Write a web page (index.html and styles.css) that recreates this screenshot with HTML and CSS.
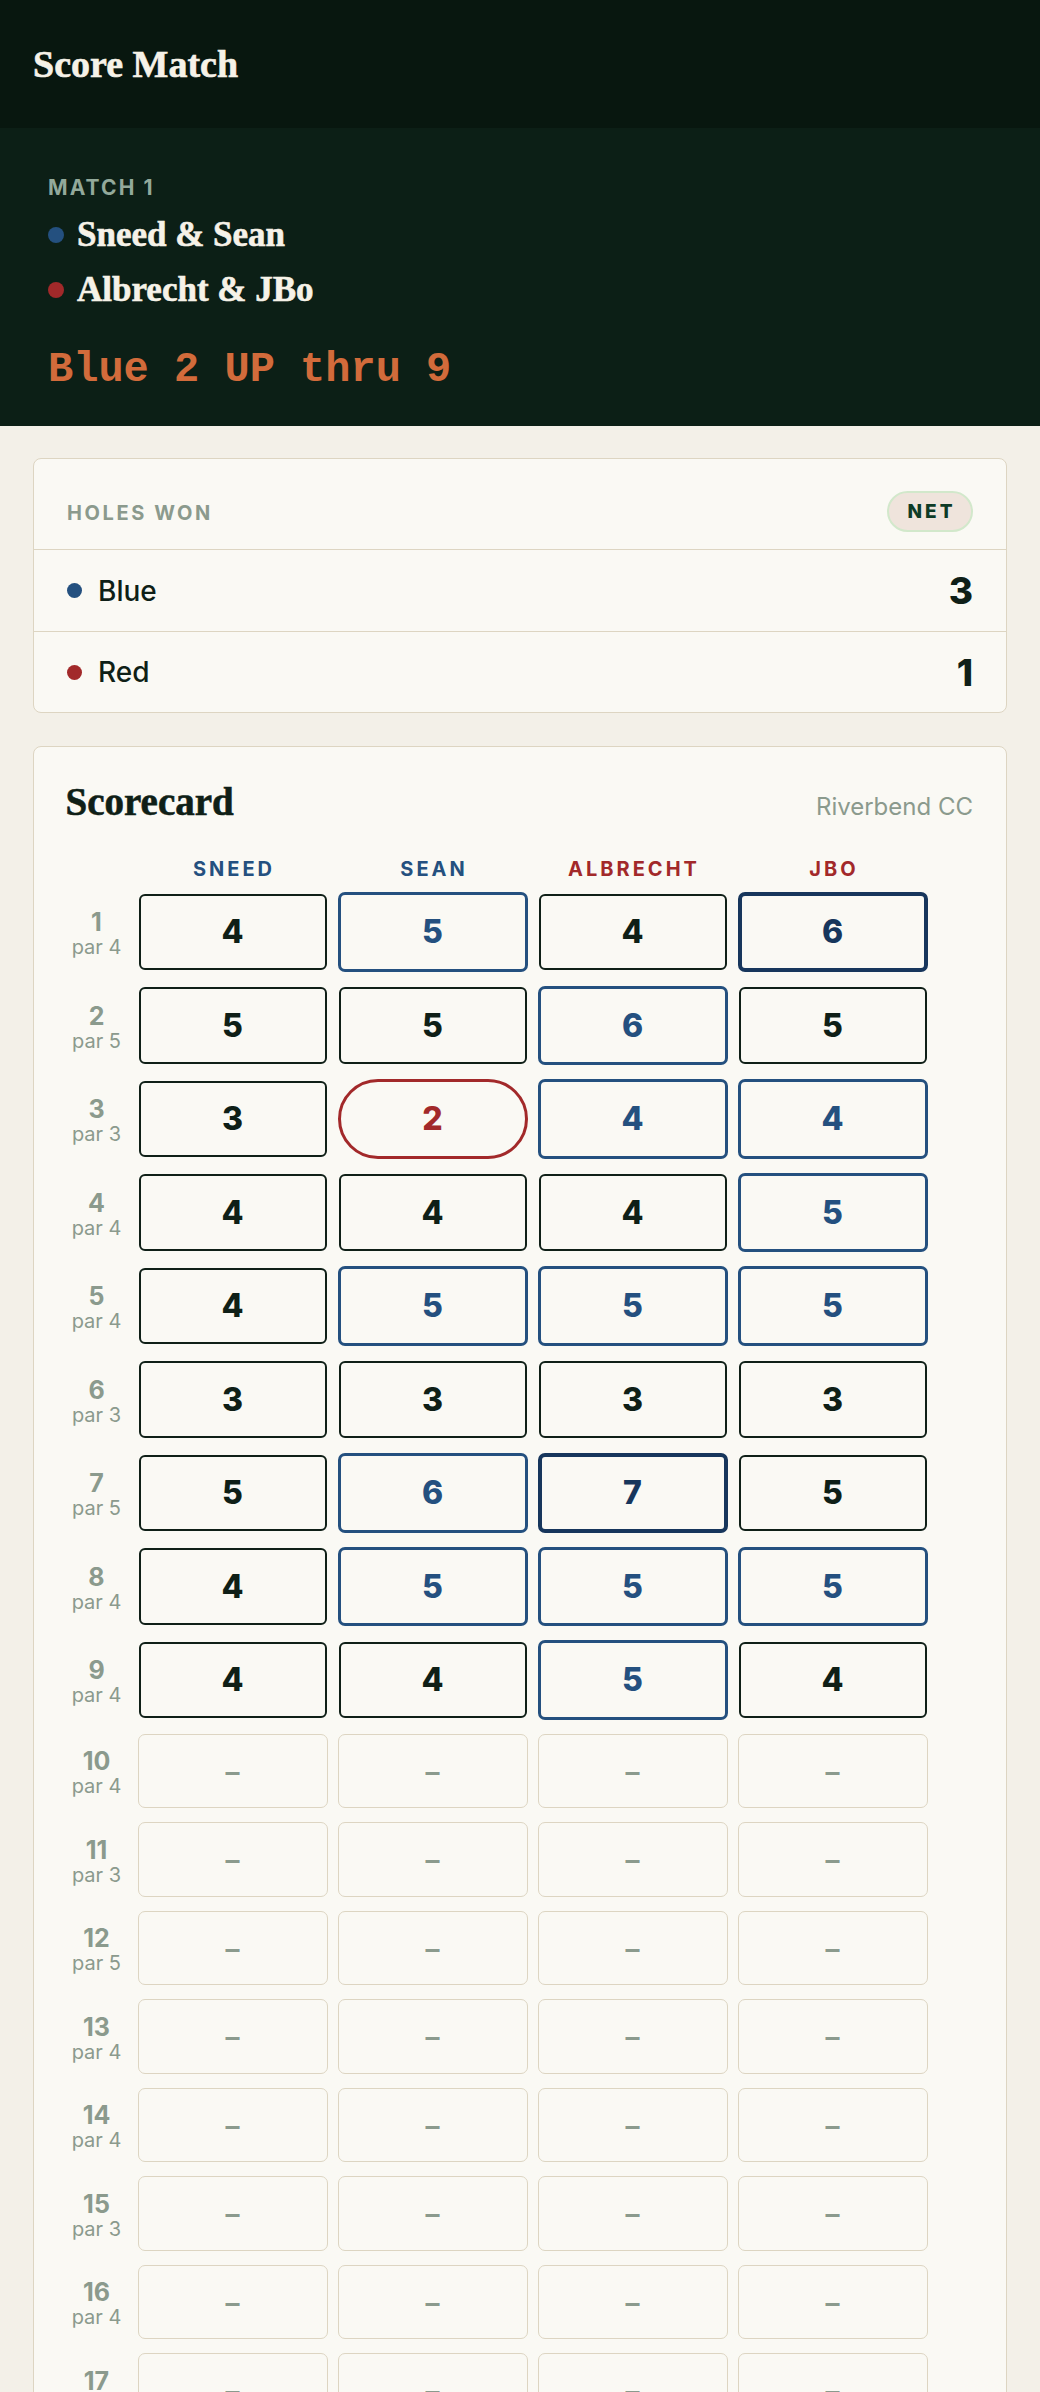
FILE: index.html
```html
<!DOCTYPE html>
<html lang="en">
<head>
<meta charset="utf-8">
<title>Score Match</title>
<link rel="stylesheet" href="styles.css">
</head>
<body>
<header class="topbar">
  <h1 class="app-title">Score Match</h1>
</header>
<section class="match">
  <div class="match-label">MATCH 1</div>
  <div class="team"><span class="dot dot-blue"></span><span class="team-name">Sneed &amp; Sean</span></div>
  <div class="team"><span class="dot dot-red"></span><span class="team-name">Albrecht &amp; JBo</span></div>
  <div class="status">Blue 2 UP thru 9</div>
</section>
<main class="content">
  <section class="card holes-card">
    <div class="holes-head">
      <span class="eyebrow">HOLES WON</span>
      <span class="pill">NET</span>
    </div>
    <div class="holes-row">
      <span class="side"><span class="dot dot-sm dot-blue"></span>Blue</span>
      <span class="count">3</span>
    </div>
    <div class="holes-row">
      <span class="side"><span class="dot dot-sm dot-red"></span>Red</span>
      <span class="count">1</span>
    </div>
  </section>

  <section class="card score-card">
    <div class="score-head">
      <h2 class="score-title">Scorecard</h2>
      <span class="course">Riverbend CC</span>
    </div>
    <div class="grid">
      <div class="row row-head">
        <span></span>
        <span class="player blue">SNEED</span>
        <span class="player blue">SEAN</span>
        <span class="player red">ALBRECHT</span>
        <span class="player red">JBO</span>
      </div>

      <div class="row filled">
        <div class="hole"><span class="hole-num">1</span><span class="par">par 4</span></div>
        <div class="cell even">4</div><div class="cell bogey">5</div><div class="cell even">4</div><div class="cell double">6</div>
      </div>
      <div class="row filled">
        <div class="hole"><span class="hole-num">2</span><span class="par">par 5</span></div>
        <div class="cell even">5</div><div class="cell even">5</div><div class="cell bogey">6</div><div class="cell even">5</div>
      </div>
      <div class="row filled">
        <div class="hole"><span class="hole-num">3</span><span class="par">par 3</span></div>
        <div class="cell even">3</div><div class="cell birdie">2</div><div class="cell bogey">4</div><div class="cell bogey">4</div>
      </div>
      <div class="row filled">
        <div class="hole"><span class="hole-num">4</span><span class="par">par 4</span></div>
        <div class="cell even">4</div><div class="cell even">4</div><div class="cell even">4</div><div class="cell bogey">5</div>
      </div>
      <div class="row filled">
        <div class="hole"><span class="hole-num">5</span><span class="par">par 4</span></div>
        <div class="cell even">4</div><div class="cell bogey">5</div><div class="cell bogey">5</div><div class="cell bogey">5</div>
      </div>
      <div class="row filled">
        <div class="hole"><span class="hole-num">6</span><span class="par">par 3</span></div>
        <div class="cell even">3</div><div class="cell even">3</div><div class="cell even">3</div><div class="cell even">3</div>
      </div>
      <div class="row filled">
        <div class="hole"><span class="hole-num">7</span><span class="par">par 5</span></div>
        <div class="cell even">5</div><div class="cell bogey">6</div><div class="cell double">7</div><div class="cell even">5</div>
      </div>
      <div class="row filled">
        <div class="hole"><span class="hole-num">8</span><span class="par">par 4</span></div>
        <div class="cell even">4</div><div class="cell bogey">5</div><div class="cell bogey">5</div><div class="cell bogey">5</div>
      </div>
      <div class="row filled">
        <div class="hole"><span class="hole-num">9</span><span class="par">par 4</span></div>
        <div class="cell even">4</div><div class="cell even">4</div><div class="cell bogey">5</div><div class="cell even">4</div>
      </div>

      <div class="row empty">
        <div class="hole"><span class="hole-num">10</span><span class="par">par 4</span></div>
        <div class="cell blank">–</div><div class="cell blank">–</div><div class="cell blank">–</div><div class="cell blank">–</div>
      </div>
      <div class="row empty">
        <div class="hole"><span class="hole-num">11</span><span class="par">par 3</span></div>
        <div class="cell blank">–</div><div class="cell blank">–</div><div class="cell blank">–</div><div class="cell blank">–</div>
      </div>
      <div class="row empty">
        <div class="hole"><span class="hole-num">12</span><span class="par">par 5</span></div>
        <div class="cell blank">–</div><div class="cell blank">–</div><div class="cell blank">–</div><div class="cell blank">–</div>
      </div>
      <div class="row empty">
        <div class="hole"><span class="hole-num">13</span><span class="par">par 4</span></div>
        <div class="cell blank">–</div><div class="cell blank">–</div><div class="cell blank">–</div><div class="cell blank">–</div>
      </div>
      <div class="row empty">
        <div class="hole"><span class="hole-num">14</span><span class="par">par 4</span></div>
        <div class="cell blank">–</div><div class="cell blank">–</div><div class="cell blank">–</div><div class="cell blank">–</div>
      </div>
      <div class="row empty">
        <div class="hole"><span class="hole-num">15</span><span class="par">par 3</span></div>
        <div class="cell blank">–</div><div class="cell blank">–</div><div class="cell blank">–</div><div class="cell blank">–</div>
      </div>
      <div class="row empty">
        <div class="hole"><span class="hole-num">16</span><span class="par">par 4</span></div>
        <div class="cell blank">–</div><div class="cell blank">–</div><div class="cell blank">–</div><div class="cell blank">–</div>
      </div>
      <div class="row empty">
        <div class="hole"><span class="hole-num">17</span><span class="par">par 4</span></div>
        <div class="cell blank">–</div><div class="cell blank">–</div><div class="cell blank">–</div><div class="cell blank">–</div>
      </div>
      <div class="row empty">
        <div class="hole"><span class="hole-num">18</span><span class="par">par 5</span></div>
        <div class="cell blank">–</div><div class="cell blank">–</div><div class="cell blank">–</div><div class="cell blank">–</div>
      </div>
    </div>
  </section>
</main>
</body>
</html>
```

FILE: styles.css
```css
* { box-sizing: border-box; }

html, body {
  margin: 0;
  padding: 0;
}

body {
  background: #f3f0e8;
  color: #0f1f17;
  font-family: "Inter", "Liberation Sans", Arial, sans-serif;
}

.topbar {
  height: 128px;
  background: #08170f;
  display: flex;
  align-items: center;
  padding: 0 33px;
}

.app-title {
  margin: 0;
  font-family: "Liberation Serif", "Times New Roman", serif;
  font-weight: 700;
  font-size: 38px;
  line-height: 44px;
  color: #f6f2e8;
  -webkit-text-stroke: 0.6px #f6f2e8;
}

.match {
  background: #0c1f16;
  padding: 47px 48px 31px;
}

.match-label {
  font-weight: 700;
  font-size: 21px;
  line-height: 26px;
  letter-spacing: 0.1em;
  color: #93a99b;
  margin-bottom: 12px;
}

.team {
  display: flex;
  align-items: center;
  gap: 13px;
  height: 44px;
  margin-bottom: 11px;
}

.team-name {
  font-family: "Liberation Serif", "Times New Roman", serif;
  font-weight: 700;
  font-size: 35px;
  line-height: 44px;
  color: #f6f2e8;
  -webkit-text-stroke: 0.6px #f6f2e8;
}

.dot {
  display: inline-block;
  width: 16px;
  height: 16px;
  border-radius: 50%;
  flex: none;
}

.dot-blue { background: #24507f; }
.dot-red { background: #a2292a; }

.status {
  margin-top: 33px;
  font-family: "Liberation Mono", "Courier New", monospace;
  font-weight: 700;
  font-size: 42px;
  line-height: 50px;
  color: #d26b3b;
}

.content {
  padding: 32px 33px;
  display: flex;
  flex-direction: column;
  gap: 33px;
}

.card {
  background: #faf9f4;
  border: 1.5px solid #ddd5c2;
  border-radius: 8px;
}

.holes-head {
  display: flex;
  align-items: center;
  justify-content: space-between;
  padding: 32px 33px 17px;
  border-bottom: 1.5px solid #ddd5c2;
}

.eyebrow {
  font-weight: 700;
  font-size: 20px;
  letter-spacing: 0.13em;
  color: #8b9a8d;
  padding-top: 3px;
}

.pill {
  display: inline-flex;
  align-items: center;
  justify-content: center;
  width: 86px;
  height: 41px;
  border-radius: 21px;
  background: #efe4dc;
  border: 2px solid #d2e8cb;
  color: #0e3b26;
  font-weight: 800;
  font-size: 19px;
  letter-spacing: 0.16em;
  padding-left: 3px;
}

.holes-row {
  display: flex;
  align-items: center;
  justify-content: space-between;
  height: 81px;
  padding: 0 33px;
}

.holes-row + .holes-row {
  border-top: 1.5px solid #ddd5c2;
}

.side {
  display: flex;
  align-items: center;
  gap: 16px;
  font-size: 28px;
  font-weight: 500;
  color: #0f1f17;
}

.dot-sm {
  width: 15px;
  height: 15px;
}

.count {
  font-size: 37px;
  font-weight: 800;
  color: #0f1f17;
}

.score-card {
  padding: 33px 33px 40px 31.5px;
}

.score-head {
  display: flex;
  align-items: baseline;
  justify-content: space-between;
  margin-bottom: 33px;
}

.score-title {
  margin: 0;
  font-family: "Liberation Serif", "Times New Roman", serif;
  font-weight: 700;
  font-size: 39px;
  line-height: 44px;
  color: #0f1f17;
  -webkit-text-stroke: 0.6px #0f1f17;
}

.course {
  font-size: 24px;
  color: #8b9a8d;
}

.grid {
  display: flex;
  flex-direction: column;
  gap: 14px;
}

.row {
  display: grid;
  grid-template-columns: 62px repeat(4, 190px);
  column-gap: 10px;
  align-items: center;
}

.row-head {
  height: 24px;
  margin-bottom: -3px;
}

.player {
  text-align: center;
  font-weight: 700;
  font-size: 20px;
  line-height: 24px;
  letter-spacing: 0.15em;
  padding-left: 3px;
}

.player.blue { color: #24507f; }
.player.red { color: #a2292a; }

.row.filled { height: 79.5px; }
.row.empty { height: 74.5px; }

.hole {
  display: flex;
  flex-direction: column;
  align-items: center;
  color: #8b9a8d;
  padding-top: 3px;
}

.hole-num {
  font-weight: 700;
  font-size: 25px;
  line-height: 28px;
}

.par {
  font-size: 20px;
  line-height: 22px;
}

.cell {
  height: 100%;
  display: flex;
  align-items: center;
  justify-content: center;
  font-weight: 800;
  font-size: 32px;
  background: #faf9f4;
}

.cell.even {
  height: 76.5px;
  margin: 0 1px;
  border: 2px solid #0f1f17;
  border-radius: 6px;
  color: #0f1f17;
}

.cell.bogey {
  border: 3.5px solid #24507f;
  border-radius: 7px;
  color: #24507f;
}

.cell.double {
  border: 4px solid #17365c;
  border-radius: 7px;
  color: #17365c;
}

.cell.birdie {
  border: 3px solid #a2292a;
  border-radius: 40px;
  color: #a2292a;
}

.cell.blank {
  border: 1.5px solid #ddd5c2;
  border-radius: 7px;
  color: #8b9a8d;
  font-weight: 600;
  font-size: 28px;
  padding-top: 2px;
}
```
